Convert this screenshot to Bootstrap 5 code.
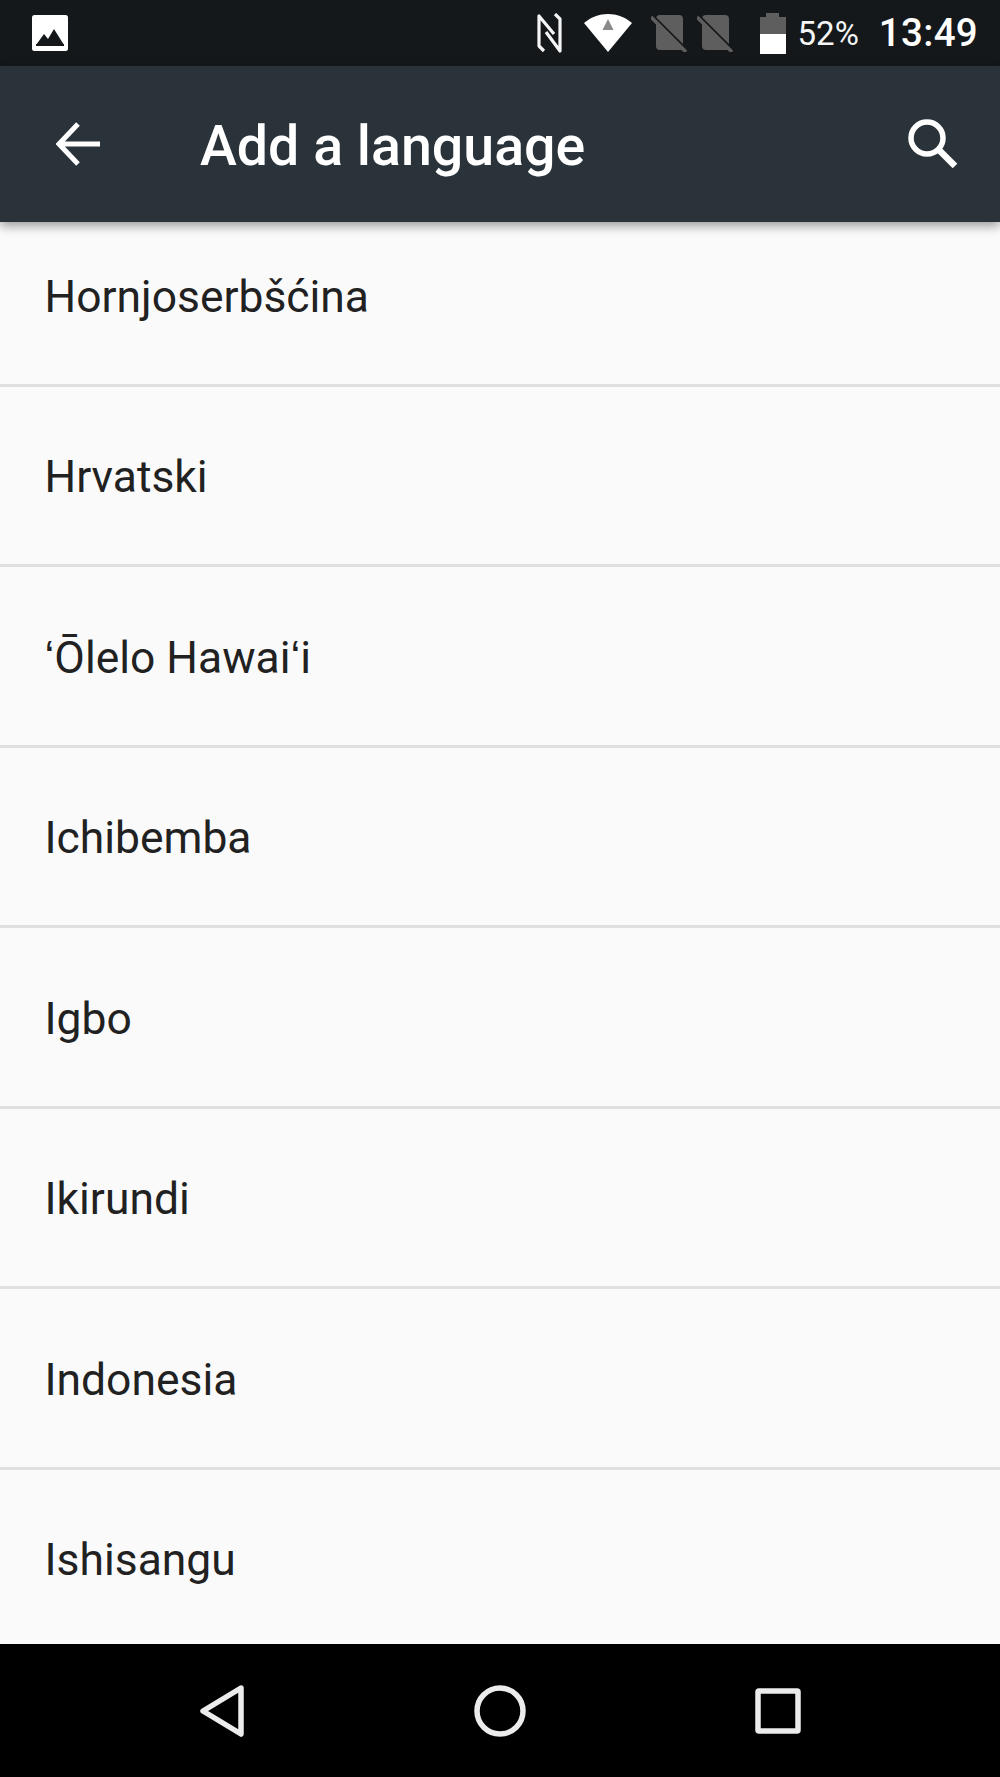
<!DOCTYPE html>
<html lang="en"><head><meta charset="utf-8"><title>Add a language</title>
<link href="https://cdn.jsdelivr.net/npm/bootstrap@5.3.0/dist/css/bootstrap.min.css" rel="stylesheet">
<style>
html,body{height:1777px;overflow:hidden}
body{font-family:Roboto,"Liberation Sans",sans-serif;background:#fafafa}
.phone-shell{height:1777px}
.status-strip{height:66px;background:#14181b;color:#fff;padding:0 22px 0 32px}
.status-strip svg{display:block;flex:none}
.pct-text{font-size:33px;line-height:1;margin-left:12px;color:#f5f5f5}
.clock-text{font-size:38.5px;font-weight:500;line-height:1;margin-left:20px;letter-spacing:.3px}
.gap-a{margin-left:21px}.gap-b{margin-left:19px}.gap-c{margin-left:10px}.gap-d{margin-left:27px}
.app-strip{height:156px;background:#2a3339;color:#fff;padding:0 42px 0 56px;box-shadow:0 4px 10px rgba(0,0,0,.38);position:relative;z-index:2}
.app-title{font-size:55.5px;font-weight:500;margin:6px 0 0 100px;line-height:1}
.lang-viewport{height:1422px;overflow:hidden}
.lang-list{margin-top:-16px}
.lang-row{height:180.5px;background:#fafafa;color:#212121;font-size:44.4px;line-height:1;padding:4px 0 0 44.5px;border:0;border-bottom:3px solid #e0e0e0;border-radius:0}
.nav-strip{height:133px;background:#000;padding-left:200px;padding-right:199px}
.home-dot{margin-right:2px}
</style></head>
<body>
<div class="phone-shell d-flex flex-column">
  <div class="status-strip d-flex align-items-center">
    <svg width="36" height="36" viewBox="0 0 36 36"><rect width="36" height="36" rx="2.5" fill="#fff"/><path d="M4 30 12 19l4 5 6-10 10 16z" fill="#14181b"/><rect x="4" y="29" width="28" height="2" fill="#14181b"/></svg>
    <svg class="ms-auto" width="26" height="40" viewBox="0 0 26 40" fill="none" stroke="#f5f5f5" stroke-width="3.2" stroke-linejoin="round"><path d="M17 21 2 3v30l5 5M9 19l14 19V6l-5-5"/></svg>
    <svg class="gap-a" width="48" height="38" viewBox="0 0 48 38"><path d="M0 9C14-3 34-3 48 9L24 38z" fill="#fff"/><path d="M24 5 29.500 16h-11z" fill="#8a8a8a"/></svg>
    <svg class="gap-b" width="36" height="38" viewBox="0 0 36 38"><path d="M9 1h19a4 4 0 0 1 4 4v31H9a4 4 0 0 1-4-4V5a4 4 0 0 1 4-4z" fill="#5e5e5e"/><path d="M0-.5 36 35.500" stroke="#14181b" stroke-width="2"/><path d="M0 3 35 38" stroke="#5e5e5e" stroke-width="3.500"/></svg>
    <svg class="gap-c" width="36" height="38" viewBox="0 0 36 38"><path d="M9 1h19a4 4 0 0 1 4 4v31H9a4 4 0 0 1-4-4V5a4 4 0 0 1 4-4z" fill="#5e5e5e"/><path d="M0-.5 36 35.500" stroke="#14181b" stroke-width="2"/><path d="M0 3 35 38" stroke="#5e5e5e" stroke-width="3.500"/></svg>
    <svg class="gap-d" width="26" height="41" viewBox="0 0 26 41"><path d="M6 0h13v4h7v37H0V4h6z" fill="#5e5e5e"/><rect y="21" width="26" height="20" fill="#fff"/></svg>
    <span class="pct-text">52%</span>
    <span class="clock-text">13:49</span>
  </div>
  <div class="app-strip d-flex align-items-center">
    <svg width="44" height="44" viewBox="0 0 44 44" fill="none" stroke="#fff" stroke-width="5"><path d="M44 22H3M22 2 3 22l19 20"/></svg>
    <h1 class="app-title">Add a language</h1>
    <svg class="ms-auto" width="50" height="50" viewBox="0 0 50 50" fill="none" stroke="#fff"><circle cx="19" cy="19" r="16" stroke-width="5.5"/><path d="M30 30 47 47" stroke-width="6.5"/></svg>
  </div>
  <div class="lang-viewport">
    <div class="list-group lang-list">
      <div class="list-group-item lang-row d-flex align-items-center">Hornjoserbšćina</div>
      <div class="list-group-item lang-row d-flex align-items-center">Hrvatski</div>
      <div class="list-group-item lang-row d-flex align-items-center">ʻŌlelo Hawaiʻi</div>
      <div class="list-group-item lang-row d-flex align-items-center">Ichibemba</div>
      <div class="list-group-item lang-row d-flex align-items-center">Igbo</div>
      <div class="list-group-item lang-row d-flex align-items-center">Ikirundi</div>
      <div class="list-group-item lang-row d-flex align-items-center">Indonesia</div>
      <div class="list-group-item lang-row d-flex align-items-center">Ishisangu</div>
    </div>
  </div>
  <div class="nav-strip d-flex align-items-center justify-content-between">
    <svg width="46" height="52" viewBox="0 0 46 52" fill="none" stroke="#ececec" stroke-width="5.5" stroke-linejoin="round"><path d="M41 3 3 26l38 23z"/></svg>
    <svg class="home-dot" width="52" height="52" viewBox="0 0 52 52" fill="none" stroke="#ececec" stroke-width="5.5"><circle cx="26" cy="26" r="23"/></svg>
    <svg width="46" height="46" viewBox="0 0 46 46" fill="none" stroke="#ececec" stroke-width="5.5" stroke-linejoin="round"><rect x="3" y="3" width="40" height="40" rx="1"/></svg>
  </div>
</div>
<script src="https://cdn.jsdelivr.net/npm/bootstrap@5.3.0/dist/js/bootstrap.bundle.min.js"></script>
</body></html>
